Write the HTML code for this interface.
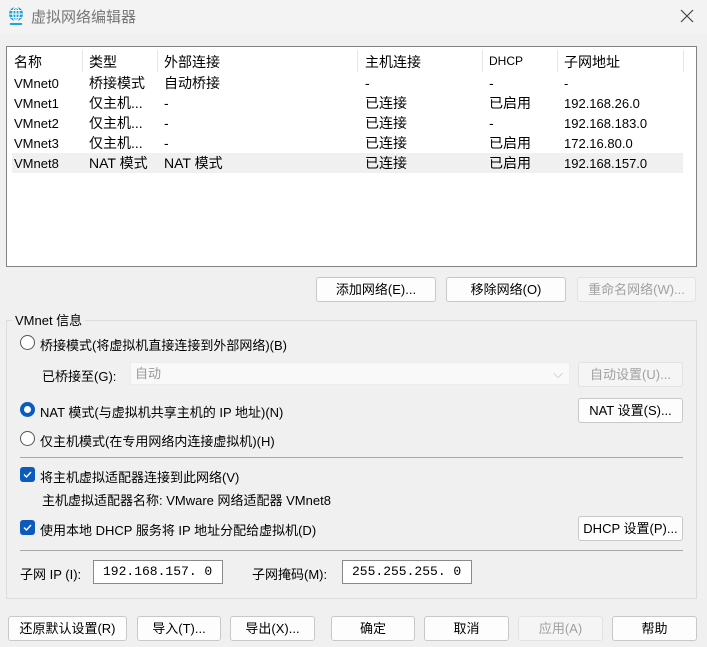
<!DOCTYPE html>
<html><head><meta charset="utf-8"><style>
*{margin:0;padding:0;box-sizing:border-box}
body{width:707px;height:647px;background:#f0f0f0;font-family:"Liberation Sans","Noto Sans CJK SC",sans-serif;font-size:13px;color:#000;position:relative;overflow:hidden}
.a{position:absolute;white-space:nowrap}
.btn{position:absolute;background:#fdfdfd;border:1px solid #c8c8c8;border-radius:3px;text-align:center;font-size:13px;line-height:23px;height:25px}
.dis{background:#f5f5f5;border-color:#e2e2e2;color:#a0a0a0}
.list{position:absolute;left:6px;top:46px;width:691px;height:221px;background:#fff;border:1px solid #828282}
.hd{position:absolute;top:3px;height:22px;border-right:1px solid #e5e5e5}
.cb{position:absolute;width:15px;height:15px;background:#0a5bbd;border-radius:3px}
.rad{position:absolute;width:15px;height:15px;border:1px solid #555;border-radius:50%;background:#fff}
.inp{position:absolute;background:#fff;border:1px solid #8a8a8a;height:24px;line-height:22px;font-family:"Liberation Mono","DejaVu Sans Mono",monospace;font-size:13px;padding-left:9px}
.sep{position:absolute;left:20px;width:663px;height:1px;background:#a8a8a8}
</style></head><body>
<div class="a" style="left:0;top:0;width:707px;height:34px;background:#f3f3f3"></div>
<svg class="a" style="left:6px;top:6px" width="20" height="20" viewBox="0 0 20 20"><circle cx="10" cy="8" r="7" fill="#2aa0d8"/><path d="M3 8h14M10 1v14M4.5 4.5h11M4.5 11.5h11" stroke="#fff" stroke-width="1.1" fill="none"/><ellipse cx="10" cy="8" rx="3.2" ry="7" stroke="#fff" stroke-width="1.1" fill="none"/><rect x="4" y="17" width="12" height="2" fill="#2aa0d8"/></svg>
<div class="a" style="left:31px;top:6px;font-size:15px;color:#777">虚拟网络编辑器</div>
<svg class="a" style="left:680px;top:9px" width="14" height="14"><path d="M1 1L13 13M13 1L1 13" stroke="#444" stroke-width="1.2"/></svg>
<div class="list">
<div class="hd" style="left:0;width:76px"></div>
<div class="hd" style="left:76px;width:75px"></div>
<div class="hd" style="left:151px;width:200px"></div>
<div class="hd" style="left:351px;width:125px"></div>
<div class="hd" style="left:476px;width:75px"></div>
<div class="hd" style="left:551px;width:126px"></div>
<div class="a" style="left:5px;top:106px;width:671px;height:20px;background:#f0f0f0"></div>
</div>
<div class="a" style="left:14px;top:52px;font-size:14px">名称</div>
<div class="a" style="left:89px;top:52px;font-size:14px">类型</div>
<div class="a" style="left:164px;top:52px;font-size:14px">外部连接</div>
<div class="a" style="left:365px;top:52px;font-size:14px">主机连接</div>
<div class="a" style="left:489px;top:54px;font-size:12px">DHCP</div>
<div class="a" style="left:564px;top:52px;font-size:14px">子网地址</div>
<div class="a" style="left:14px;top:74px;line-height:20px;font-size:13px">VMnet0<br>VMnet1<br>VMnet2<br>VMnet3<br>VMnet8</div>
<div class="a" style="left:89px;top:73px;line-height:20px;font-size:14px">桥接模式<br>仅主机...<br>仅主机...<br>仅主机...<br>NAT 模式</div>
<div class="a" style="left:164px;top:73px;line-height:20px;font-size:14px">自动桥接<br>-<br>-<br>-<br>NAT 模式</div>
<div class="a" style="left:365px;top:73px;line-height:20px;font-size:14px">-<br>已连接<br>已连接<br>已连接<br>已连接</div>
<div class="a" style="left:489px;top:73px;line-height:20px;font-size:14px">-<br>已启用<br>-<br>已启用<br>已启用</div>
<div class="a" style="left:564px;top:74px;line-height:20px;font-size:13px">-<br>192.168.26.0<br>192.168.183.0<br>172.16.80.0<br>192.168.157.0</div>
<div class="btn" style="left:316px;top:277px;width:120px">添加网络(E)...</div>
<div class="btn" style="left:446px;top:277px;width:120px">移除网络(O)</div>
<div class="btn dis" style="left:577px;top:277px;width:119px">重命名网络(W)...</div>
<div class="a" style="left:6px;top:320px;width:691px;height:279px;border:1px solid #dcdcdc"></div>
<div class="a" style="left:12px;top:310px;background:#f0f0f0;padding:0 3px;font-size:13px">VMnet 信息</div>
<div class="rad" style="left:20px;top:335px"></div>
<div class="a" style="left:40px;top:335px">桥接模式(将虚拟机直接连接到外部网络)(B)</div>
<div class="a" style="left:42px;top:366px">已桥接至(G):</div>
<div class="a" style="left:130px;top:362px;width:440px;height:23px;background:#f9f9f9;border:1px solid #ececec;color:#999;padding-left:4px;line-height:21px">自动<span style="position:absolute;right:6px;color:#bbb">⌵</span></div>
<div class="btn dis" style="left:578px;top:362px;width:105px">自动设置(U)...</div>
<div class="a" style="left:20px;top:402px;width:15px;height:15px;border-radius:50%;background:#0a5bbd"><div class="a" style="left:4px;top:4px;width:7px;height:7px;border-radius:50%;background:#fff"></div></div>
<div class="a" style="left:40px;top:402px">NAT 模式(与虚拟机共享主机的 IP 地址)(N)</div>
<div class="btn" style="left:578px;top:398px;width:105px">NAT 设置(S)...</div>
<div class="rad" style="left:20px;top:431px"></div>
<div class="a" style="left:40px;top:431px">仅主机模式(在专用网络内连接虚拟机)(H)</div>
<div class="sep" style="top:457px"></div>
<div class="cb" style="left:20px;top:467px"><svg width="15" height="15"><path d="M4 7.5l2.5 2.5 4.5-5" stroke="#fff" stroke-width="1.4" fill="none"/></svg></div>
<div class="a" style="left:40px;top:467px">将主机虚拟适配器连接到此网络(V)</div>
<div class="a" style="left:42px;top:490px">主机虚拟适配器名称: VMware 网络适配器 VMnet8</div>
<div class="cb" style="left:20px;top:520px"><svg width="15" height="15"><path d="M4 7.5l2.5 2.5 4.5-5" stroke="#fff" stroke-width="1.4" fill="none"/></svg></div>
<div class="a" style="left:40px;top:520px">使用本地 DHCP 服务将 IP 地址分配给虚拟机(D)</div>
<div class="btn" style="left:578px;top:516px;width:105px">DHCP 设置(P)...</div>
<div class="sep" style="top:550px"></div>
<div class="a" style="left:20px;top:564px">子网 IP (I):</div>
<div class="inp" style="left:93px;top:560px;width:130px">192.168.157. 0</div>
<div class="a" style="left:252px;top:564px">子网掩码(M):</div>
<div class="inp" style="left:342px;top:560px;width:130px">255.255.255. 0</div>
<div class="btn" style="left:8px;top:616px;width:119px">还原默认设置(R)</div>
<div class="btn" style="left:137px;top:616px;width:84px">导入(T)...</div>
<div class="btn" style="left:230px;top:616px;width:85px">导出(X)...</div>
<div class="btn" style="left:331px;top:616px;width:84px">确定</div>
<div class="btn" style="left:424px;top:616px;width:85px">取消</div>
<div class="btn dis" style="left:518px;top:616px;width:85px">应用(A)</div>
<div class="btn" style="left:612px;top:616px;width:85px">帮助</div>
</body></html>
